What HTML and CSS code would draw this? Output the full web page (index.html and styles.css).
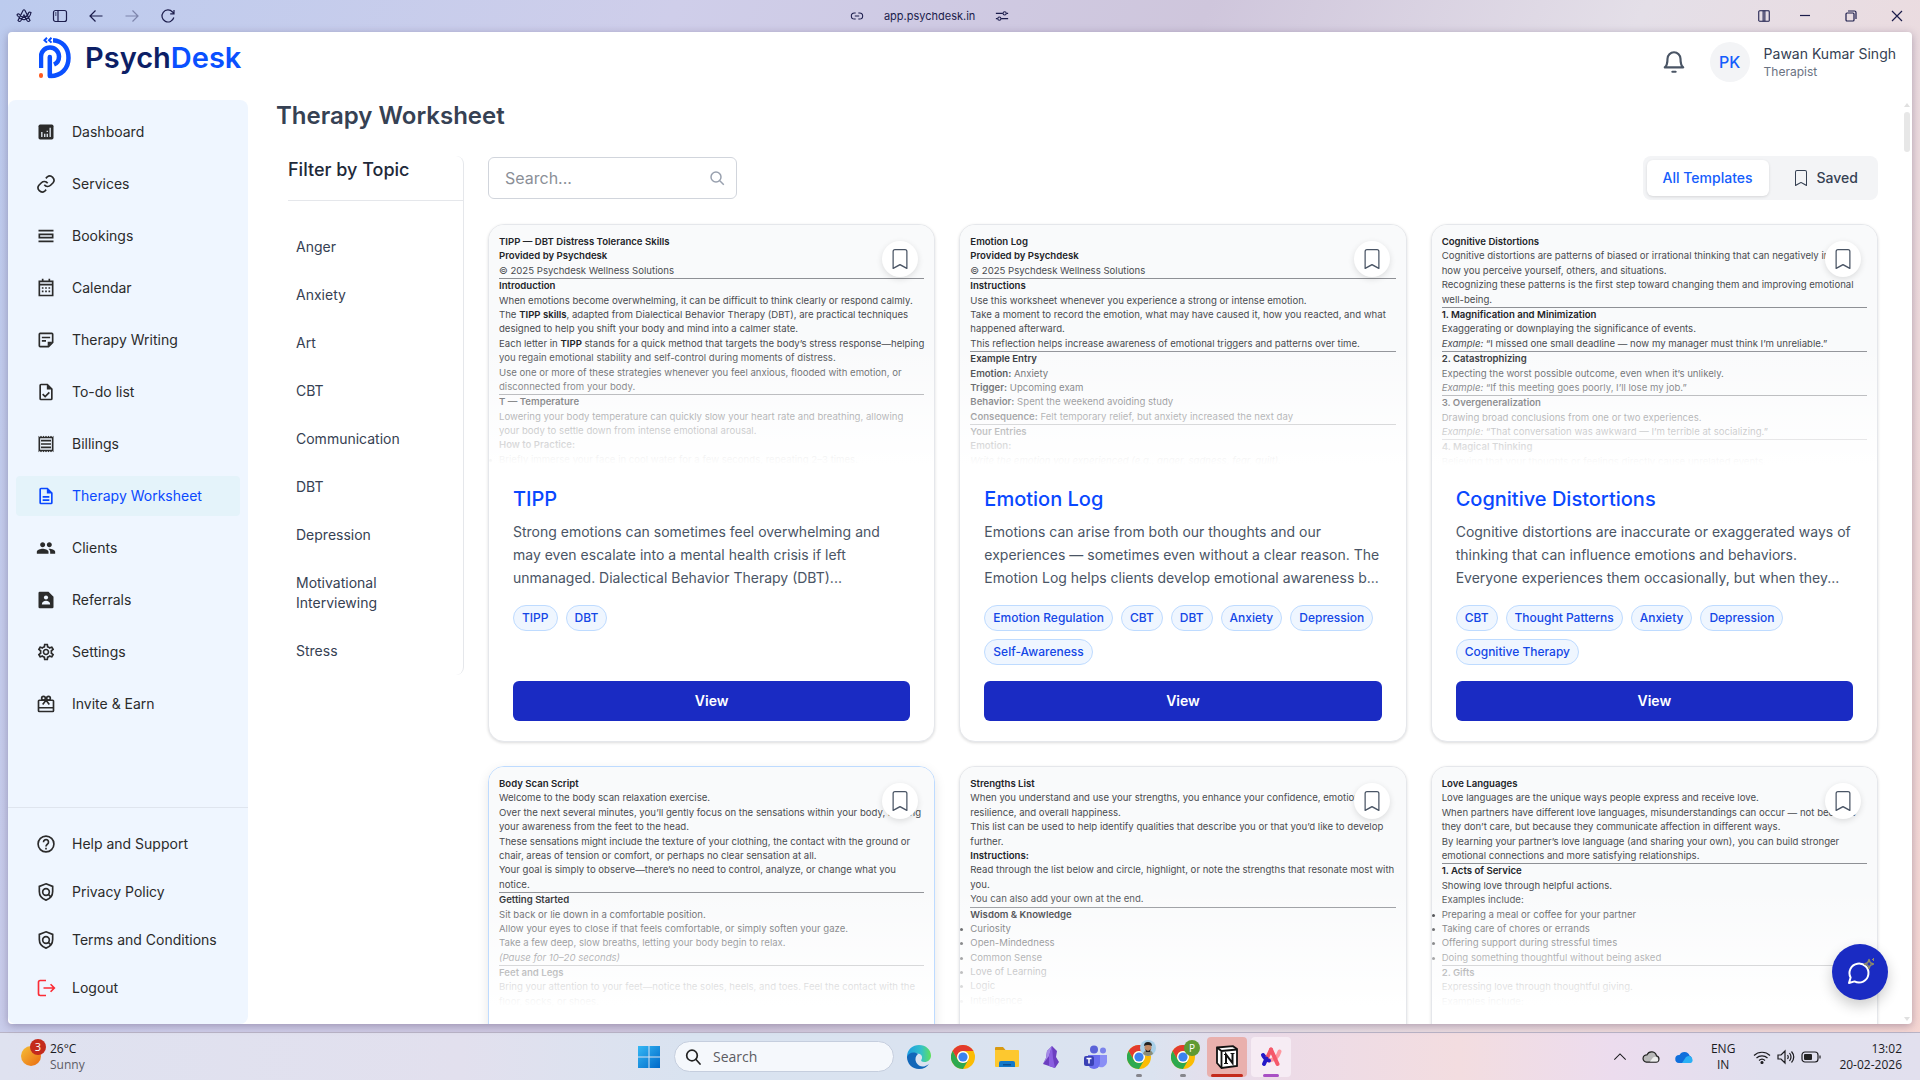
FILE: index.html
```html
<!DOCTYPE html>
<html lang="en">
<head>
    <meta charset="UTF-8">
    <meta name="viewport" content="width=device-width, initial-scale=1.0">
    <title>PsychDesk - Therapy Worksheet</title>
    <link rel="stylesheet" href="styles.css">
</head>
<body>

<!-- Shared symbols -->
<svg class="symbols" aria-hidden="true">
    <symbol id="bookmark" viewBox="0 0 16 16">
        <path d="M2 2a2 2 0 0 1 2-2h8a2 2 0 0 1 2 2v13.5a.5.5 0 0 1-.777.416L8 13.101l-5.223 2.815A.5.5 0 0 1 2 15.5V2zm2-1a1 1 0 0 0-1 1v12.566l4.723-2.482a.5.5 0 0 1 .554 0L13 14.566V2a1 1 0 0 0-1-1H4z"/>
    </symbol>
    <symbol id="shield" viewBox="0 0 24 24">
        <path d="M12 2.2l8 3.1v6.2c0 4.700-3.200 8.800-8 10.300-4.800-1.500-8-5.600-8-10.300V5.300z" fill="none" stroke="currentColor" stroke-width="2"/>
        <circle cx="12" cy="12" r="4" fill="none" stroke="currentColor" stroke-width="2"/>
        <path d="M14.500 14.500l3.800 3.800" stroke="currentColor" stroke-width="2"/>
    </symbol>
    <symbol id="chrome" viewBox="0 0 24 24">
        <circle cx="12" cy="12" r="12" fill="#fbbc04"/>
        <path d="M1.600 6A12 12 0 0 1 22.400 6H12a6 6 0 0 0-5.200 9z" fill="#e33b2e"/>
        <path d="M1.600 6A12 12 0 0 0 12 24l5.200-9a6 6 0 0 1-10.400 0z" fill="#2da94f"/>
        <circle cx="12" cy="12" r="6" fill="#fff"/>
        <circle cx="12" cy="12" r="4.600" fill="#3b82f0"/>
    </symbol>
</svg>

<!-- Browser bar -->
<div class="titlebar">
    <div class="titlebar-left">
        <button class="bar-btn" aria-label="Arc menu"><svg viewBox="0 0 16 16" width="16" height="16" class="line"><path d="M2 12.500L7 2.500Q8 1 9 2.500l5 10q-1.500 2-3 0L8 7l-3 5.500q-1.500 2-3 0zM1 7q4 5.500 8 4.500 5-1.500 6-7-2-1-2.500.500-1 3.500-4.500 4.500Q5 9 3 6 1.500 5.500 1 7z"/></svg></button>
        <button class="bar-btn" aria-label="Toggle sidebar"><svg viewBox="0 0 16 16" width="16" height="16" class="line"><rect x="1.500" y="2.500" width="13" height="11" rx="2"/><path d="M6 2.500v11M3 5h1.500M3 7h1.500"/></svg></button>
        <button class="bar-btn" aria-label="Back"><svg viewBox="0 0 16 16" width="16" height="16" class="line"><path d="M14.500 8H2M7.500 2.500L2 8l5.500 5.500"/></svg></button>
        <button class="bar-btn bar-btn-off" aria-label="Forward"><svg viewBox="0 0 16 16" width="16" height="16" class="line"><path d="M1.500 8H14M8.500 2.500L14 8l-5.500 5.500"/></svg></button>
        <button class="bar-btn" aria-label="Reload"><svg viewBox="0 0 16 16" width="16" height="16" class="line"><path d="M13.800 9.500A6 6 0 1 1 12.500 4l1.200 1.500M14 2v3.800h-3.800"/></svg></button>
    </div>
    <div class="titlebar-url">
        <svg viewBox="0 0 16 16" width="14" height="14" class="line"><path d="M6.500 4.500H5a3.500 3.500 0 0 0 0 7h1.500M9.500 4.500H11a3.500 3.500 0 0 1 0 7H9.500M5.500 8h5"/></svg>
        <span>app.psychdesk.in</span>
        <svg viewBox="0 0 16 16" width="14" height="14" class="line"><path d="M1 5h8M13 5h2M1 11h2M7 11h8"/><circle cx="11" cy="5" r="1.800"/><circle cx="5" cy="11" r="1.800"/></svg>
    </div>
    <div class="titlebar-right">
        <button class="bar-btn" aria-label="Split view"><svg viewBox="0 0 16 16" width="14" height="14" class="line"><rect x="2" y="2" width="12" height="12" rx="1"/><path d="M7 2v12M9 2v12"/></svg></button>
        <button class="win-btn" aria-label="Minimize"><svg viewBox="0 0 12 12" width="12" height="12" class="line"><path d="M1 5.500h10"/></svg></button>
        <button class="win-btn" aria-label="Restore"><svg viewBox="0 0 12 12" width="12" height="12" class="line"><rect x="1" y="3" width="8" height="8" rx="1"/><path d="M3 1h6.500q1.500 0 1.500 1.500V9"/></svg></button>
        <button class="win-btn" aria-label="Close"><svg viewBox="0 0 12 12" width="12" height="12" class="line"><path d="M1 1l10 10M11 1L1 11"/></svg></button>
    </div>
</div>

<div class="window">
    <header class="header">
        <a class="logo" href="#">
            <svg viewBox="0 0 32 42" width="32" height="42" fill="none">
                <path d="M2 31V19.500a9 9 0 0 1 18 0c0 4-1.500 6.500-5 8" stroke="#0a50ff" stroke-width="4.500"/>
                <path d="M10.800 39V20" stroke="#0a50ff" stroke-width="4.500" stroke-linecap="round"/>
                <path d="M14 3.200c9 .500 15.500 7 15.500 17.800 0 10.500-7 17.800-18 18" stroke="#0a50ff" stroke-width="4.500"/>
                <path d="M8 .800L5.500 3.200 8 5.600M12.500.800L10 3.200l2.500 2.400" stroke="#0a50ff" stroke-width="2"/>
                <rect x="0" y="36" width="4" height="5" rx="2" fill="#ff5a1f"/>
            </svg>
            <span class="logo-text">Psych<span class="logo-blue">Desk</span></span>
        </a>
        <div class="account">
            <button class="bell" aria-label="Notifications">
                <svg viewBox="0 0 24 24" width="26" height="26" fill="none" stroke="#4a5565" stroke-width="2" stroke-linecap="round" stroke-linejoin="round"><path d="M6 9a6 6 0 0 1 12 0c0 6 2.500 8 2.500 8h-17S6 15 6 9M10.500 21h3"/></svg>
            </button>
            <div class="avatar">PK</div>
            <div>
                <div class="account-name">Pawan Kumar Singh</div>
                <div class="account-role">Therapist</div>
            </div>
        </div>
    </header>

    <div class="body">
        <nav class="sidebar">
            <div class="nav-group nav-main">
                <a class="nav-item" href="#"><svg viewBox="0 0 24 24" class="nav-icon"><rect x="3" y="3" width="18" height="18" rx="2"/><path d="M7 12v6M10.500 14v4M13.500 10.500v1.500M13.500 14v4M17 7v11" stroke="#eff6ff" stroke-width="1.500"/></svg>Dashboard</a>
                <a class="nav-item" href="#"><svg viewBox="0 0 24 24" class="nav-icon nav-stroke"><path d="M10 13a5 5 0 0 0 7.500.500l3-3a5 5 0 0 0-7-7l-1.700 1.700M14 11a5 5 0 0 0-7.500-.500l-3 3a5 5 0 0 0 7 7l1.700-1.700"/></svg>Services</a>
                <a class="nav-item" href="#"><svg viewBox="0 0 24 24" class="nav-icon nav-stroke"><path d="M3 5.500h18M3 18.500h18M4 10h16v4H4z"/></svg>Bookings</a>
                <a class="nav-item" href="#"><svg viewBox="0 0 24 24" class="nav-icon"><path d="M4 4h16v17H4zM4 8h16M8 1v4M16 1v4" fill="none" stroke="currentColor" stroke-width="2"/><path d="M7 11h2v2H7zM11 11h2v2h-2zM15 11h2v2h-2zM7 15h2v2H7zM11 15h2v2h-2zM15 15h2v2h-2z"/></svg>Calendar</a>
                <a class="nav-item" href="#"><svg viewBox="0 0 24 24" class="nav-icon nav-stroke"><path d="M5 4h14a1 1 0 0 1 1 1v10l-5 5H5a1 1 0 0 1-1-1V5a1 1 0 0 1 1-1zM7 9h10M7 13h5"/><path d="M14 20v-6h6z" fill="currentColor" stroke="none"/></svg>Therapy Writing</a>
                <a class="nav-item" href="#"><svg viewBox="0 0 24 24" class="nav-icon"><path d="M14 2H6a2 2 0 0 0-2 2v16a2 2 0 0 0 2 2h12a2 2 0 0 0 2-2V8zm4 18H6V4h7v5h5z"/><path d="M8 14.500l3 3 5-5" fill="none" stroke="currentColor" stroke-width="2"/></svg>To-do list</a>
                <a class="nav-item" href="#"><svg viewBox="0 0 24 24" class="nav-icon"><path d="M19.500 3.500L18 2l-1.500 1.500L15 2l-1.500 1.500L12 2l-1.500 1.500L9 2 7.500 3.500 6 2 4.500 3.500 3 2v20l1.500-1.500L6 22l1.500-1.500L9 22l1.500-1.500L12 22l1.500-1.500L15 22l1.500-1.500L18 22l1.500-1.500L21 22V2zM19 19H5V5h14zM6 15h12v2H6zM6 11h12v2H6zM6 7h12v2H6z"/></svg>Billings</a>
                <a class="nav-item nav-active" href="#"><svg viewBox="0 0 24 24" class="nav-icon"><path d="M8 16h8v2H8zM8 12h8v2H8zM14 2H6a2 2 0 0 0-2 2v16a2 2 0 0 0 2 2h12a2 2 0 0 0 2-2V8zm4 18H6V4h7v5h5z"/></svg>Therapy Worksheet</a>
                <a class="nav-item" href="#"><svg viewBox="0 0 24 24" class="nav-icon"><path d="M16 11c1.660 0 2.990-1.340 2.990-3S17.660 5 16 5s-3 1.340-3 3 1.340 3 3 3zm-8 0c1.660 0 2.990-1.340 2.990-3S9.660 5 8 5 5 6.340 5 8s1.340 3 3 3zm0 2c-2.330 0-7 1.170-7 3.500V19h14v-2.500C15 14.170 10.330 13 8 13zm8 0c-.290 0-.620.020-.970.050 1.160.840 1.970 1.970 1.970 3.450V19h6v-2.500c0-2.330-4.670-3.500-7-3.500z"/></svg>Clients</a>
                <a class="nav-item" href="#"><svg viewBox="0 0 24 24" class="nav-icon"><path d="M15 2H4.500A1.500 1.500 0 0 0 3 3.500v17A1.500 1.500 0 0 0 4.500 22h15a1.500 1.500 0 0 0 1.500-1.500V8z"/><circle cx="12" cy="9" r="2.500" fill="#eff6ff"/><path d="M7 17.500c0-3 2.500-4.500 5-4.500s5 1.500 5 4.500z" fill="#eff6ff"/></svg>Referrals</a>
                <a class="nav-item" href="#"><svg viewBox="0 0 24 24" class="nav-icon"><path d="M19.430 12.980c.04-.32.07-.64.07-.98 0-.34-.03-.66-.07-.98l2.110-1.650c.19-.15.24-.42.12-.64l-2-3.460a.5.5 0 0 0-.61-.22l-2.490 1c-.52-.4-1.080-.73-1.690-.98l-.38-2.650A.488.488 0 0 0 14 2h-4c-.25 0-.46.18-.49.42l-.38 2.650c-.61.25-1.170.59-1.690.98l-2.490-1a.566.566 0 0 0-.18-.03c-.17 0-.34.09-.43.25l-2 3.460c-.13.22-.07.49.12.64l2.110 1.650c-.04.32-.07.65-.07.98 0 .33.03.66.07.98l-2.110 1.650c-.19.15-.24.42-.12.64l2 3.460a.5.5 0 0 0 .61.22l2.490-1c.52.4 1.080.73 1.690.98l.38 2.650c.03.24.24.42.49.42h4c.25 0 .46-.18.49-.42l.38-2.650c.61-.25 1.170-.59 1.690-.98l2.490 1c.06.02.12.03.18.03.17 0 .34-.09.43-.25l2-3.460c.12-.22.07-.49-.12-.64l-2.110-1.650zm-1.980-1.710c.04.31.05.52.05.73 0 .21-.02.43-.05.73l-.14 1.130.89.7 1.080.84-.7 1.210-1.270-.51-1.040-.42-.9.68c-.43.32-.84.56-1.250.73l-1.060.43-.16 1.130-.2 1.350h-1.400l-.19-1.350-.16-1.130-1.060-.43c-.43-.18-.83-.41-1.230-.71l-.91-.7-1.060.43-1.270.51-.7-1.210 1.080-.84.89-.7-.14-1.130c-.03-.31-.05-.54-.05-.74s.02-.43.05-.73l.14-1.130-.89-.7-1.080-.84.7-1.210 1.270.51 1.040.42.9-.68c.43-.32.84-.56 1.250-.73l1.060-.43.16-1.130.2-1.350h1.390l.19 1.350.16 1.130 1.060.43c.43.18.83.41 1.230.71l.91.7 1.060-.43 1.270-.51.7 1.210-1.070.85-.89.7.14 1.130zM12 8c-2.210 0-4 1.790-4 4s1.790 4 4 4 4-1.790 4-4-1.790-4-4-4zm0 6c-1.100 0-2-.9-2-2s.9-2 2-2 2 .9 2 2-.9 2-2 2z"/></svg>Settings</a>
                <a class="nav-item" href="#"><svg viewBox="0 0 24 24" class="nav-icon nav-stroke"><path d="M4 7.500h16a1 1 0 0 1 1 1V20a1 1 0 0 1-1 1H4a1 1 0 0 1-1-1V8.500a1 1 0 0 1 1-1zM3 16.500h18M12 7.500l-4 5M12 7.500l4 5"/><circle cx="9" cy="5" r="2.200"/><circle cx="15" cy="5" r="2.200"/></svg>Invite &amp; Earn</a>
            </div>
            <div class="nav-group nav-foot">
                <a class="nav-item" href="#"><svg viewBox="0 0 24 24" class="nav-icon nav-stroke"><circle cx="12" cy="12" r="9.500"/><path d="M9 9.800a3 3 0 1 1 4.800 2.300c-1 .800-1.800 1.300-1.800 2.900M12 16.500v2"/></svg>Help and Support</a>
                <a class="nav-item" href="#"><svg class="nav-icon"><use href="#shield"/></svg>Privacy Policy</a>
                <a class="nav-item" href="#"><svg class="nav-icon"><use href="#shield"/></svg>Terms and Conditions</a>
                <a class="nav-item" href="#"><svg viewBox="0 0 24 24" class="nav-icon nav-stroke nav-red"><path d="M12 3H5a2 2 0 0 0-2 2v14a2 2 0 0 0 2 2h7M9 12h13M17.500 7.500L22 12l-4.500 4.500"/></svg>Logout</a>
            </div>
        </nav>

        <main class="main">
            <h1>Therapy Worksheet</h1>
            <div class="columns">
                <aside class="filter">
                    <h2>Filter by Topic</h2>
                    <div class="topics">
                        <a href="#">Anger</a>
                        <a href="#">Anxiety</a>
                        <a href="#">Art</a>
                        <a href="#">CBT</a>
                        <a href="#">Communication</a>
                        <a href="#">DBT</a>
                        <a href="#">Depression</a>
                        <a href="#">Motivational Interviewing</a>
                        <a href="#">Stress</a>
                    </div>
                </aside>

                <section class="templates">
                    <div class="toolbar">
                        <label class="search">
                            <input type="text" placeholder="Search..." aria-label="Search templates">
                            <svg viewBox="0 0 16 16" width="16" height="16" fill="none" stroke="#99a1af" stroke-width="1.500"><circle cx="7" cy="7" r="5"/><path d="M10.800 10.800l4 4"/></svg>
                        </label>
                        <div class="tabs">
                            <button class="tab tab-active">All Templates</button>
                            <button class="tab"><svg width="16" height="16" fill="currentColor"><use href="#bookmark"/></svg>Saved</button>
                        </div>
                    </div>

                    <div class="grid">
                        <article class="card">
                            <div class="preview">
                                <div class="doc">
                                    <p><b>TIPP — DBT Distress Tolerance Skills</b></p>
                                    <p><b>Provided by Psychdesk</b></p>
                                    <p>© 2025 Psychdesk Wellness Solutions</p>
                                    <hr>
                                    <p><b>Introduction</b></p>
                                    <p>When emotions become overwhelming, it can be difficult to think clearly or respond calmly.</p>
                                    <p>The <b>TIPP skills</b>, adapted from Dialectical Behavior Therapy (DBT), are practical techniques designed to help you shift your body and mind into a calmer state.</p>
                                    <p>Each letter in <b>TIPP</b> stands for a quick method that targets the body’s stress response—helping you regain emotional stability and self-control during moments of distress.</p>
                                    <p>Use one or more of these strategies whenever you feel anxious, flooded with emotion, or disconnected from your body.</p>
                                    <hr>
                                    <p><b>T — Temperature</b></p>
                                    <p>Lowering your body temperature can quickly slow your heart rate and breathing, allowing your body to settle down from intense emotional arousal.</p>
                                    <p><b>How to Practice:</b></p>
                                    <ul>
                                        <li>Briefly immerse your face in cool water for a few seconds, repeating 2–3 times.</li>
                                    </ul>
                                </div>
                            </div>
                            <button class="save" aria-label="Save TIPP"><svg width="20" height="20"><use href="#bookmark"/></svg></button>
                            <div class="card-body">
                                <h3>TIPP</h3>
                                <p class="desc">Strong emotions can sometimes feel overwhelming and may even escalate into a mental health crisis if left unmanaged. Dialectical Behavior Therapy (DBT)...</p>
                                <div class="tags"><span>TIPP</span><span>DBT</span></div>
                                <button class="view">View</button>
                            </div>
                        </article>

                        <article class="card">
                            <div class="preview">
                                <div class="doc">
                                    <p><b>Emotion Log</b></p>
                                    <p><b>Provided by Psychdesk</b></p>
                                    <p>© 2025 Psychdesk Wellness Solutions</p>
                                    <hr>
                                    <p><b>Instructions</b></p>
                                    <p>Use this worksheet whenever you experience a strong or intense emotion.</p>
                                    <p>Take a moment to record the emotion, what may have caused it, how you reacted, and what happened afterward.</p>
                                    <p>This reflection helps increase awareness of emotional triggers and patterns over time.</p>
                                    <hr>
                                    <p><b>Example Entry</b></p>
                                    <p><b>Emotion:</b> Anxiety</p>
                                    <p><b>Trigger:</b> Upcoming exam</p>
                                    <p><b>Behavior:</b> Spent the weekend avoiding study</p>
                                    <p><b>Consequence:</b> Felt temporary relief, but anxiety increased the next day</p>
                                    <hr>
                                    <p><b>Your Entries</b></p>
                                    <p><b>Emotion:</b></p>
                                    <p><i>Write the emotion you experienced (e.g., anger, sadness, fear, guilt).</i></p>
                                </div>
                            </div>
                            <button class="save" aria-label="Save Emotion Log"><svg width="20" height="20"><use href="#bookmark"/></svg></button>
                            <div class="card-body">
                                <h3>Emotion Log</h3>
                                <p class="desc">Emotions can arise from both our thoughts and our experiences — sometimes even without a clear reason. The Emotion Log helps clients develop emotional awareness b...</p>
                                <div class="tags"><span>Emotion Regulation</span><span>CBT</span><span>DBT</span><span>Anxiety</span><span>Depression</span><span>Self-Awareness</span></div>
                                <button class="view">View</button>
                            </div>
                        </article>

                        <article class="card">
                            <div class="preview">
                                <div class="doc">
                                    <p><b>Cognitive Distortions</b></p>
                                    <p>Cognitive distortions are patterns of biased or irrational thinking that can negatively impact how you perceive yourself, others, and situations.</p>
                                    <p>Recognizing these patterns is the first step toward changing them and improving emotional well-being.</p>
                                    <hr>
                                    <p><b>1. Magnification and Minimization</b></p>
                                    <p>Exaggerating or downplaying the significance of events.</p>
                                    <p><i>Example:</i> “I missed one small deadline — now my manager must think I’m unreliable.”</p>
                                    <hr>
                                    <p><b>2. Catastrophizing</b></p>
                                    <p>Expecting the worst possible outcome, even when it’s unlikely.</p>
                                    <p><i>Example:</i> “If this meeting goes poorly, I’ll lose my job.”</p>
                                    <hr>
                                    <p><b>3. Overgeneralization</b></p>
                                    <p>Drawing broad conclusions from one or two experiences.</p>
                                    <p><i>Example:</i> “That conversation was awkward — I’m terrible at socializing.”</p>
                                    <hr>
                                    <p><b>4. Magical Thinking</b></p>
                                    <p>Believing that your thoughts or feelings directly cause unrelated events.</p>
                                </div>
                            </div>
                            <button class="save" aria-label="Save Cognitive Distortions"><svg width="20" height="20"><use href="#bookmark"/></svg></button>
                            <div class="card-body">
                                <h3>Cognitive Distortions</h3>
                                <p class="desc">Cognitive distortions are inaccurate or exaggerated ways of thinking that can influence emotions and behaviors. Everyone experiences them occasionally, but when they...</p>
                                <div class="tags"><span>CBT</span><span>Thought Patterns</span><span>Anxiety</span><span>Depression</span><span>Cognitive Therapy</span></div>
                                <button class="view">View</button>
                            </div>
                        </article>

                        <article class="card card-hover">
                            <div class="preview">
                                <div class="doc">
                                    <p><b>Body Scan Script</b></p>
                                    <p>Welcome to the body scan relaxation exercise.</p>
                                    <p>Over the next several minutes, you’ll gently focus on the sensations within your body, moving your awareness from the feet to the head.</p>
                                    <p>These sensations might include the texture of your clothing, the contact with the ground or chair, areas of tension or comfort, or perhaps no clear sensation at all.</p>
                                    <p>Your goal is simply to observe—there’s no need to control, analyze, or change what you notice.</p>
                                    <hr>
                                    <p><b>Getting Started</b></p>
                                    <p>Sit back or lie down in a comfortable position.</p>
                                    <p>Allow your eyes to close if that feels comfortable, or simply soften your gaze.</p>
                                    <p>Take a few deep, slow breaths, letting your body begin to relax.</p>
                                    <p><i>(Pause for 10–20 seconds)</i></p>
                                    <hr>
                                    <p><b>Feet and Legs</b></p>
                                    <p>Bring your attention to your feet—notice the soles, heels, and toes. Feel the contact with the floor, socks, or shoes.</p>
                                </div>
                            </div>
                            <button class="save" aria-label="Save Body Scan Script"><svg width="20" height="20"><use href="#bookmark"/></svg></button>
                        </article>

                        <article class="card">
                            <div class="preview">
                                <div class="doc">
                                    <p><b>Strengths List</b></p>
                                    <p>When you understand and use your strengths, you enhance your confidence, emotional resilience, and overall happiness.</p>
                                    <p>This list can be used to help identify qualities that describe you or that you’d like to develop further.</p>
                                    <p><b>Instructions:</b></p>
                                    <p>Read through the list below and circle, highlight, or note the strengths that resonate most with you.</p>
                                    <p>You can also add your own at the end.</p>
                                    <hr>
                                    <p><b>Wisdom &amp; Knowledge</b></p>
                                    <ul>
                                        <li>Curiosity</li>
                                        <li>Open-Mindedness</li>
                                        <li>Common Sense</li>
                                        <li>Love of Learning</li>
                                        <li>Logic</li>
                                        <li>Intelligence</li>
                                    </ul>
                                </div>
                            </div>
                            <button class="save" aria-label="Save Strengths List"><svg width="20" height="20"><use href="#bookmark"/></svg></button>
                        </article>

                        <article class="card">
                            <div class="preview">
                                <div class="doc">
                                    <p><b>Love Languages</b></p>
                                    <p>Love languages are the unique ways people express and receive love.</p>
                                    <p>When partners have different love languages, misunderstandings can occur — not because they don’t care, but because they communicate affection in different ways.</p>
                                    <p>By learning your partner’s love language (and sharing your own), you can build stronger emotional connections and more satisfying relationships.</p>
                                    <hr>
                                    <p><b>1. Acts of Service</b></p>
                                    <p>Showing love through helpful actions.</p>
                                    <p>Examples include:</p>
                                    <ul>
                                        <li>Preparing a meal or coffee for your partner</li>
                                        <li>Taking care of chores or errands</li>
                                        <li>Offering support during stressful times</li>
                                        <li>Doing something thoughtful without being asked</li>
                                    </ul>
                                    <hr>
                                    <p><b>2. Gifts</b></p>
                                    <p>Expressing love through thoughtful giving.</p>
                                    <p>Examples include:</p>
                                </div>
                            </div>
                            <button class="save" aria-label="Save Love Languages"><svg width="20" height="20"><use href="#bookmark"/></svg></button>
                        </article>
                    </div>
                </section>
            </div>
        </main>
        <div class="scrollbar"><span class="arrow-up"></span><span class="thumb"></span><span class="arrow-down"></span></div>
    </div>

    <button class="chat" aria-label="Open chat">
        <svg viewBox="0 0 28 28" width="28" height="28" fill="none" stroke-linejoin="round">
            <path d="M3 25l1.600-5.500A9.500 9.500 0 1 1 8.500 23.400z" stroke="#fff" stroke-width="2"/>
            <path d="M23 1.500l1.300 3.200 3.200 1.300-3.200 1.300L23 10.500l-1.300-3.200-3.200-1.300 3.200-1.300z" stroke="#8d8a6a" stroke-width="1.500"/>
            <path d="M27.500 0v3M26 1.500h2" stroke="#8d8a6a"/>
        </svg>
    </button>
</div>

<!-- Taskbar -->
<footer class="taskbar">
    <div class="weather">
        <svg viewBox="0 0 28 38" width="28" height="38">
            <defs><linearGradient id="sun" x1="0" y1="0" x2="1" y2="1"><stop offset="0" stop-color="#f5c03a"/><stop offset="1" stop-color="#ea6a10"/></linearGradient></defs>
            <circle cx="12" cy="18" r="10" fill="url(#sun)"/>
            <circle cx="19" cy="9" r="8" fill="#c42b1c"/>
            <text x="19" y="13" class="badge-num">3</text>
        </svg>
        <div><div>26°C</div><div class="muted">Sunny</div></div>
    </div>
    <div class="apps">
        <button class="app" aria-label="Start">
            <svg viewBox="0 0 24 24" width="24" height="24"><defs><linearGradient id="win" x1="0" y1="0" x2="1" y2="1"><stop offset="0" stop-color="#35b8f5"/><stop offset="1" stop-color="#0068c8"/></linearGradient></defs><path fill="url(#win)" d="M1 1h10.500v10.500H1zM12.500 1H23v10.500H12.500zM1 12.500h10.500V23H1zM12.500 12.500H23V23H12.500z"/></svg>
        </button>
        <label class="task-search">
            <svg viewBox="0 0 16 16" width="16" height="16" fill="none" stroke="#222" stroke-width="1.700" stroke-linecap="round"><circle cx="7" cy="6.500" r="5.300"/><path d="M11 10.500l4 4.500"/></svg>
            <input type="text" placeholder="Search" aria-label="Search Windows">
        </label>
        <button class="app" aria-label="Edge">
            <svg viewBox="0 0 24 24" width="24" height="24"><defs><linearGradient id="edge" x1="0" y1="0" x2="1" y2="0"><stop offset="0" stop-color="#1b9de2"/><stop offset=".600" stop-color="#35c1c8"/><stop offset="1" stop-color="#5fe05a"/></linearGradient></defs><path d="M0 12C0 4 6 0 12 0c7 0 12 5 12 10.500 0 4-3 6.500-6.500 6.500-3 0-4-1-3-2.500 1.500-2.500 0-6-4.500-6C5 8.500 1 11 0 14z" fill="url(#edge)"/><path d="M0 12c1-3.500 4.500-5 7.500-4.500C10 8 11 9 11 9c-3 2-4 8 1 11.500 3 2 7 1 10-1.500-2 3-5.500 5-10 5C5 24 0 18.500 0 12z" fill="#1267b9"/></svg>
        </button>
        <button class="app" aria-label="Chrome"><svg width="24" height="24"><use href="#chrome"/></svg></button>
        <button class="app" aria-label="File Explorer">
            <svg viewBox="0 0 24 24" width="24" height="24"><path d="M0 3q0-1 1-1h7l2.500 3H0z" fill="#d99a10"/><path d="M0 5h23q1 0 1 1v15q0 1-1 1H1q-1 0-1-1z" fill="#fdc82f"/><path d="M4 22v-4q0-2 2-2h12q2 0 2 2v4z" fill="#1479c9"/><path d="M8 19h8v1.500H8z" fill="#0b4f91"/></svg>
        </button>
        <button class="app" aria-label="Obsidian">
            <svg viewBox="0 0 24 24" width="24" height="24"><path d="M13 1l5 5-1 6 3 5-4 6-6-2-6-2 3-6 1-7z" fill="#6c3fc0"/><path d="M13 1l-3 10-6 8 3-6 1-7z" fill="#a58be8"/><path d="M13 1l1 12 2 10-6-2V11z" fill="#8a5ee0"/></svg>
        </button>
        <button class="app" aria-label="Teams">
            <svg viewBox="0 0 24 24" width="24" height="24"><circle cx="11" cy="4.500" r="4" fill="#5b63d8"/><circle cx="20" cy="5.500" r="3" fill="#7b83eb"/><path d="M15 10h9v7a6 6 0 0 1-9 4.500z" fill="#8a8ff5"/><path d="M5 10h12v8a6 6 0 0 1-12 0z" fill="#6b6ff0"/><rect x="1" y="11" width="10" height="10" rx="2" fill="#3a41b5"/><path d="M3.500 13.500h5M6 13.500v5" stroke="#fff" stroke-width="1.500"/></svg>
        </button>
        <button class="app app-running" aria-label="Chrome, personal profile">
            <svg width="24" height="24"><use href="#chrome"/></svg>
            <svg class="profile" viewBox="0 0 16 16" width="16" height="16"><circle cx="8" cy="8" r="8" fill="#a8cfe8"/><path d="M3 14q1-4 5-4t5 4q-5 4-10 0z" fill="#8a8c78"/><circle cx="8" cy="7.500" r="3.500" fill="#c08a66"/><path d="M4 6q0-4 4-4t4 4q-4-2-8 0zM5.500 9q2.500 4 5 0l-.500 3h-4z" fill="#222"/></svg>
        </button>
        <button class="app app-running" aria-label="Chrome, work profile">
            <svg width="24" height="24"><use href="#chrome"/></svg>
            <span class="profile profile-p">P</span>
        </button>
        <button class="app app-notion" aria-label="Notion">
            <svg viewBox="0 0 24 24" width="24" height="24"><path d="M2 2.500L18 1.200 22 4v17L6.500 23 2 18z" fill="#fff" stroke="#111" stroke-width="1.800"/><path d="M2 2.500L6.500 6 22 4.500M6.500 6v17" fill="none" stroke="#111" stroke-width="1.800"/><path d="M11 18.500V9.500l6.500 8.500V8.500" stroke="#111" stroke-width="2" fill="none"/><path d="M9 9.500h3M9 18.500h4M15.500 8.500h4" stroke="#111" stroke-width="1.200"/></svg>
        </button>
        <button class="app app-arc" aria-label="Arc">
            <svg viewBox="0 0 24 24" width="24" height="24" fill="none" stroke-linecap="round" stroke-linejoin="round"><path d="M20.500 6.500q-2.500 9-11.500 9" stroke="#ff98a0" stroke-width="4"/><path d="M4 10q2 4 6 5.500" stroke="#2419c8" stroke-width="4"/><path d="M12 4.500L18.500 19" stroke="#f5586a" stroke-width="4"/><path d="M12 4.500L8.500 12" stroke="#f5586a" stroke-width="4"/><path d="M7.500 13.500L5 19" stroke="#2419c8" stroke-width="4"/></svg>
        </button>
    </div>
    <div class="tray">
        <div class="tray-icons">
            <svg viewBox="0 0 16 16" width="14" height="14" class="line"><path d="M1.500 11L8 4.500l6.500 6.500"/></svg>
            <svg viewBox="0 0 18 12" width="18" height="12"><path d="M4.500 11.200h9.500a3.200 3.200 0 0 0 .500-6.300A5 5 0 0 0 5 3.800a3.700 3.700 0 0 0-.500 7.400z" fill="#b9b9b9" stroke="#222" stroke-width="1.200"/><path d="M8 10.600l3-4.200q3-1.500 4.500.500 2 3.700-1.500 3.700z" fill="#eee"/></svg>
            <svg viewBox="0 0 18 12" width="18" height="12"><path d="M4 12h10a4 4 0 0 0 .500-7.500A5.500 5.500 0 0 0 4.500 4 4 4 0 0 0 4 12z" fill="#0f6fdc"/><path d="M7 12l4-6q4-2.500 6 1 2 5-3 5z" fill="#2bb0f5"/></svg>
        </div>
        <div class="lang"><div>ENG</div><div>IN</div></div>
        <div class="status">
            <svg viewBox="0 0 18 16" width="18" height="16" class="line"><path d="M1 6.500a11.500 11.500 0 0 1 16 0M3.500 9a8 8 0 0 1 11 0M6 11.500a4.500 4.500 0 0 1 6 0"/><circle cx="9" cy="13.500" r="1" fill="#222"/></svg>
            <svg viewBox="0 0 18 16" width="18" height="16" class="line"><path d="M1 6v4h3l4 4V2L4 6zM10.500 6q1.500 2 0 4M12.500 4q3 4 0 8M14.500 2.500q4.500 5.500 0 11"/></svg>
            <svg viewBox="0 0 20 12" width="20" height="12" class="line"><rect x="1" y="1" width="16" height="10" rx="3"/><path d="M19 4.500v3"/><rect x="3" y="3" width="8" height="6" rx="1" fill="#222" stroke="none"/></svg>
        </div>
        <div class="clock"><div>13:02</div><div>20-02-2026</div></div>
    </div>
</footer>

</body>
</html>
```

FILE: styles.css
```css
* {
    box-sizing: border-box;
}
body {
    margin: 0;
    height: 100vh;
    display: flex;
    flex-direction: column;
    overflow: hidden;
    font-family: Inter, "Liberation Sans", sans-serif;
    font-size: 14px;
    line-height: 20px;
    color: #1e2939;
    background: linear-gradient(115deg, #bccbee 0%, #cfceea 28%, #cfc6dc 50%, #e4dfe8 68%, #f6d6d2 100%);
}
h1, h2, h3, p, ul {
    margin: 0;
    padding: 0;
}
a {
    color: inherit;
    text-decoration: none;
}
button {
    font: inherit;
    color: inherit;
    border: 0;
    padding: 0;
    background: none;
    cursor: pointer;
}
input {
    font: inherit;
    border: 0;
    padding: 0;
    outline: 0;
    background: none;
    min-width: 0;
}
svg {
    flex: none;
    display: block;
}
.symbols {
    position: absolute;
    width: 0;
    height: 0;
}
.line {
    fill: none;
    stroke: currentColor;
    stroke-width: 1.2;
}

/* browser bar */
.titlebar {
    height: 32px;
    flex: none;
    display: grid;
    grid-template-columns: 14fr auto 15fr;
    align-items: center;
    color: #1b1c4b;
    font-size: 11px;
}
.titlebar-left {
    display: flex;
    padding-left: 6px;
}
.titlebar-right {
    display: flex;
    justify-content: flex-end;
}
.titlebar-url {
    display: flex;
    align-items: center;
    gap: 20px;
}
.bar-btn {
    width: 36px;
    height: 32px;
    display: flex;
    align-items: center;
    justify-content: center;
}
.bar-btn-off {
    opacity: 0.4;
}
.win-btn {
    width: 46px;
    height: 32px;
    display: flex;
    align-items: center;
    justify-content: center;
}

/* page window */
.window {
    flex: 1;
    min-height: 0;
    margin: 0 8px 8px;
    display: flex;
    flex-direction: column;
    position: relative;
    background: #fff;
    border-radius: 4px;
    overflow: hidden;
    box-shadow: 0 2px 8px rgba(60, 40, 80, 0.35);
}
.header {
    height: 68px;
    flex: none;
    display: flex;
    justify-content: space-between;
    padding: 4px 16px 0 31px;
}
.logo {
    display: flex;
    align-items: center;
    gap: 14px;
    height: 44px;
}
.logo-text {
    font-size: 29px;
    line-height: 40px;
    font-weight: 600;
    color: #0d1f66;
}
.logo-blue {
    color: #0a50ff;
}
.account {
    display: flex;
    align-items: center;
    height: 52px;
}
.bell {
    margin-right: 23px;
}
.avatar {
    width: 40px;
    height: 40px;
    border-radius: 50%;
    background: #f3f4f6;
    color: #155dfc;
    font-size: 16px;
    font-weight: 500;
    line-height: 40px;
    text-align: center;
    margin-right: 14px;
}
.account-name {
    font-size: 14px;
    line-height: 20px;
    color: #364153;
}
.account-role {
    font-size: 12px;
    line-height: 16px;
    color: #6a7282;
}
.body {
    flex: 1;
    min-height: 0;
    display: flex;
}

/* sidebar */
.sidebar {
    width: 240px;
    flex: none;
    display: flex;
    flex-direction: column;
    justify-content: space-between;
    background: #eff6ff;
    border-radius: 8px;
}
.nav-group {
    display: flex;
    flex-direction: column;
    padding: 12px 8px;
}
.nav-main {
    gap: 12px;
}
.nav-foot {
    gap: 8px;
    border-top: 1px solid #dfe5ee;
    padding: 16px 8px;
}
.nav-item {
    display: flex;
    align-items: center;
    gap: 16px;
    height: 40px;
    padding-left: 20px;
    border-radius: 4px;
    color: #2b2b2b;
}
.nav-icon {
    width: 20px;
    height: 20px;
    fill: currentColor;
}
.nav-stroke {
    fill: none;
    stroke: currentColor;
    stroke-width: 2;
}
.nav-active {
    background: #e4f3fa;
    color: #0a48ff;
}
.nav-red {
    color: #fb2c36;
}

/* content */
.main {
    flex: 1;
    min-width: 0;
    overflow: hidden;
    padding: 0 26px 0 28px;
}
h1 {
    font-size: 24px;
    line-height: 32px;
    font-weight: 600;
    color: #364153;
    margin-bottom: 24px;
}
.columns {
    display: flex;
    align-items: flex-start;
    gap: 24px;
}
.filter {
    width: 188px;
    flex: none;
    padding-left: 12px;
    border-right: 1px solid #e5e7eb;
    border-radius: 8px;
}
.filter h2 {
    font-size: 18px;
    line-height: 28px;
    font-weight: 500;
    color: #1e2939;
    padding-bottom: 16px;
    border-bottom: 1px solid #e5e7eb;
}
.topics {
    padding: 22px 48px 0 8px;
}
.topics a {
    display: block;
    padding: 14px 0;
    color: #364153;
}
.templates {
    flex: 1;
    min-width: 0;
}
.toolbar {
    display: flex;
    justify-content: space-between;
    align-items: center;
    height: 44px;
    margin-bottom: 24px;
}
.search {
    width: 249px;
    height: 42px;
    display: flex;
    align-items: center;
    padding: 0 11px 0 16px;
    border: 1px solid #d1d5dc;
    border-radius: 6px;
    font-size: 16px;
}
.search input {
    flex: 1;
}
.search input::placeholder {
    color: #8b8f97;
}
.tabs {
    display: flex;
    gap: 8px;
    padding: 4px;
    border-radius: 8px;
    background: #f3f4f6;
}
.tab {
    display: flex;
    align-items: center;
    gap: 8px;
    height: 36px;
    padding: 0 16px;
    border-radius: 6px;
    font-weight: 500;
    color: #364153;
}
.tab-active {
    background: #fff;
    color: #155dfc;
    box-shadow: 0 1px 3px rgba(0, 0, 0, 0.12);
}
.grid {
    display: grid;
    grid-template-columns: repeat(3, 1fr);
    gap: 24px;
}
.card {
    display: flex;
    flex-direction: column;
    position: relative;
    min-width: 0;
    min-height: 518px;
    background: #fff;
    border: 1px solid #e5e7eb;
    border-radius: 16px;
    overflow: hidden;
    box-shadow: 0 1px 3px rgba(0, 0, 0, 0.14);
}
.card-hover {
    border-color: #bedbff;
    box-shadow: 0 4px 12px rgba(0, 0, 0, 0.1);
}
.preview {
    height: 240px;
    flex: none;
    position: relative;
    overflow: hidden;
    background: #f9fafb;
}
/* fades the page out towards the card text */
.preview::after {
    content: "";
    position: absolute;
    inset: 0;
    background: linear-gradient(rgba(255, 255, 255, 0) 50%, #fff);
}
/* the worksheet itself, in small type */
.doc {
    padding: 10px;
    font-size: 0.6rem;
    line-height: 1.5;
    color: #4a4c50;
}
.doc b {
    font-weight: 600;
    color: #222428;
}
.doc hr {
    margin: 0;
    border: 0;
    border-top: 1px solid #8e9095;
}
.doc li {
    list-style: none;
    position: relative;
}
.doc li::before {
    content: "";
    position: absolute;
    left: -10px;
    top: 6px;
    width: 3px;
    height: 3px;
    border-radius: 50%;
    background: #222428;
}
.save {
    position: absolute;
    top: 16px;
    right: 16px;
    width: 36px;
    height: 36px;
    display: flex;
    align-items: center;
    justify-content: center;
    border-radius: 50%;
    background: #fff;
    fill: #4a5565;
    box-shadow: 0 2px 6px rgba(0, 0, 0, 0.12);
}
.card-body {
    flex: 1;
    display: flex;
    flex-direction: column;
    padding: 20px 24px;
}
h3 {
    font-size: 20px;
    line-height: 28px;
    font-weight: 500;
    color: #0a48ff;
    margin-bottom: 7px;
}
.desc {
    line-height: 23px;
    color: #4a5565;
    margin-bottom: 16px;
}
.tags {
    display: flex;
    flex-wrap: wrap;
    gap: 8px;
    margin-bottom: 16px;
}
.tags span {
    height: 26px;
    padding: 0 8px;
    border: 1px solid #bedbff;
    border-radius: 13px;
    background: #eff6ff;
    color: #1447e6;
    font-size: 12px;
    font-weight: 500;
    line-height: 24px;
}
.view {
    height: 40px;
    margin-top: auto;
    border-radius: 6px;
    background: #1a2bc3;
    color: #fff;
    font-weight: 600;
}
.scrollbar {
    width: 8px;
    flex: none;
    display: flex;
    flex-direction: column;
    align-items: center;
    padding: 3px 2px 3px 0;
}
.thumb {
    width: 6px;
    height: 40px;
    margin: 5px 0 auto;
    border-radius: 3px;
    background: #e7e7e7;
}
.arrow-up, .arrow-down {
    border: 3px solid transparent;
}
.arrow-up {
    border-top: 0;
    border-bottom: 4px solid #e0e0e0;
}
.arrow-down {
    border-bottom: 0;
    border-top: 4px solid #e0e0e0;
}
.chat {
    position: absolute;
    right: 24px;
    bottom: 24px;
    width: 56px;
    height: 56px;
    display: flex;
    align-items: center;
    justify-content: center;
    border-radius: 50%;
    background: #1a2bc3;
    box-shadow: 0 6px 14px rgba(0, 0, 0, 0.2);
}

/* taskbar */
.taskbar {
    height: 48px;
    flex: none;
    display: grid;
    grid-template-columns: 1fr auto 1fr;
    align-items: center;
    border-top: 1px solid #b9b4c6;
    background: linear-gradient(90deg, #dfe2f0 0%, #e2e0ee 24%, #d9e3f0 36%, #dbe3f0 60%, #ecdbe8 66%, #f3dde0 76%, #ecdcee 84%, #e0e0ee 92%, #e2e0ee 100%);
    font-family: "Open Sans", "Noto Sans", sans-serif;
    font-size: 12px;
    line-height: 16px;
    color: #1b1b1f;
}
.weather {
    display: flex;
    align-items: center;
    gap: 3px;
    padding-left: 19px;
}
.badge-num {
    fill: #fff;
    font-size: 11px;
    text-anchor: middle;
}
.muted {
    color: #5c5c66;
}
.apps {
    display: flex;
    align-items: center;
}
.app {
    width: 44px;
    height: 47px;
    display: flex;
    align-items: center;
    justify-content: center;
    position: relative;
}
.app-running::after, .app-notion::after, .app-arc::after {
    content: "";
    position: absolute;
    bottom: 3px;
    left: 50%;
    width: 6px;
    margin-left: -3px;
    height: 3px;
    border-radius: 2px;
    background: #85858c;
}
.app-notion, .app-arc {
    width: 40px;
    height: 40px;
    margin: 0 2px;
    border-radius: 4px;
}
.app-notion {
    background: #e9b0ad;
}
.app-notion::after {
    bottom: 0;
    width: 32px;
    margin-left: -16px;
    background: #c42b1c;
}
.app-arc {
    background: #f6ecf4;
}
.app-arc::after {
    bottom: 0;
    width: 16px;
    margin-left: -8px;
    background: #a94fc4;
}
.profile {
    position: absolute;
    top: 7px;
    right: 5px;
}
.profile-p {
    width: 16px;
    height: 16px;
    border-radius: 50%;
    background: #5f9a32;
    color: #fff;
    font-size: 10px;
    text-align: center;
}
.task-search {
    width: 220px;
    height: 31px;
    display: flex;
    align-items: center;
    gap: 12px;
    margin: 0 3px;
    padding: 0 10px;
    border: 1px solid #c5cede;
    border-radius: 16px;
    background: #f5f8fc;
    font-size: 14px;
}
.task-search input {
    flex: 1;
}
.task-search input::placeholder {
    color: #5c5c62;
}
.tray {
    display: flex;
    justify-content: flex-end;
    align-items: center;
    gap: 18px;
    padding-right: 18px;
    text-align: right;
}
.tray-icons {
    display: flex;
    align-items: center;
    gap: 15px;
}
.lang {
    text-align: center;
}
.status {
    display: flex;
    align-items: center;
    gap: 6px;
}
```
